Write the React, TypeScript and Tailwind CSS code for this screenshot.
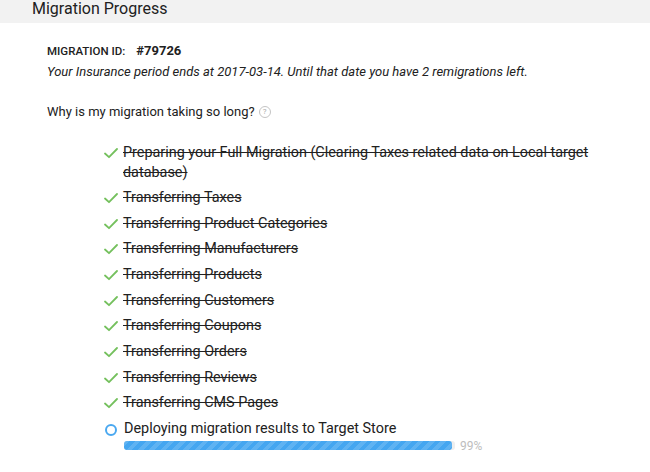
const steps = [
  "Preparing your Full Migration (Clearing Taxes related data on Local target database)",
  "Transferring Taxes",
  "Transferring Product Categories",
  "Transferring Manufacturers",
  "Transferring Products",
  "Transferring Customers",
  "Transferring Coupons",
  "Transferring Orders",
  "Transferring Reviews",
  "Transferring CMS Pages",
];

function CheckIcon() {
  return (
    <svg width="14" height="11" viewBox="0 0 14 11" fill="none" className="shrink-0">
      <path d="M1 5.5 L5 9.2 L13 1" stroke="#74c05d" strokeWidth="1.8" strokeLinecap="round" strokeLinejoin="round" />
    </svg>
  );
}

export default function App() {
  const progress = 99;

  return (
    <div className="h-[472px] w-[650px] overflow-hidden bg-white font-['Roboto',sans-serif] text-[#212121]">
      {/* Header */}
      <div className="h-[23px] bg-[#f2f2f2] pl-8 text-[16px] leading-[18px]">Migration Progress</div>

      <div className="pl-[47px] pt-[20px]">
        <div className="flex items-baseline text-[11.5px] leading-[16px]">
          <span className="font-medium">MIGRATION ID:</span>
          <span className="ml-[11px] text-[13px] font-bold">#79726</span>
        </div>
        <p className="mt-[4px] text-[13px] italic leading-[18px]">
          Your Insurance period ends at 2017-03-14. Until that date you have 2 remigrations left.
        </p>

        <div className="mt-[22px] flex items-center text-[13px] leading-[18px]">
          <span>Why is my migration taking so long?</span>
          <span className="ml-[4px] flex h-[12px] w-[12px] items-center justify-center rounded-full border border-[#c4c4c4] text-[8px] leading-none text-[#a8a8a8]">
            ?
          </span>
        </div>

        {/* Steps */}
        <ul className="mt-[21.5px] w-[545px] space-y-[5.65px] pl-[57px] text-[14.4px] leading-[20px]">
          {steps.map((s) => (
            <li key={s} className="flex items-start gap-[5px]">
              <span className="mt-[5px]">
                <CheckIcon />
              </span>
              <span className="line-through decoration-[#212121]">{s}</span>
            </li>
          ))}
          <li className="flex items-start gap-[7px]">
            <span className="mt-[5px] ml-[1px] h-[12px] w-[12px] shrink-0 rounded-full border-2 border-[#4aa8f0]" />
            <div className="flex flex-col">
              <span>Deploying migration results to Target Store</span>
              <div className="mt-px flex items-center gap-[5px]">
                <div className="h-[9px] w-[331px] rounded-[3px] bg-[#eeeeee]">
                  <div
                    className="h-full rounded-[3px] bg-[#45a6f0] bg-[repeating-linear-gradient(135deg,rgba(255,255,255,0.14)_0,rgba(255,255,255,0.14)_4px,transparent_4px,transparent_8px)]"
                    style={{ width: `${progress}%` }}
                  />
                </div>
                <span className="text-[12px] leading-none text-[#bdbdbd]">{progress}%</span>
              </div>
            </div>
          </li>
        </ul>
      </div>
    </div>
  );
}
